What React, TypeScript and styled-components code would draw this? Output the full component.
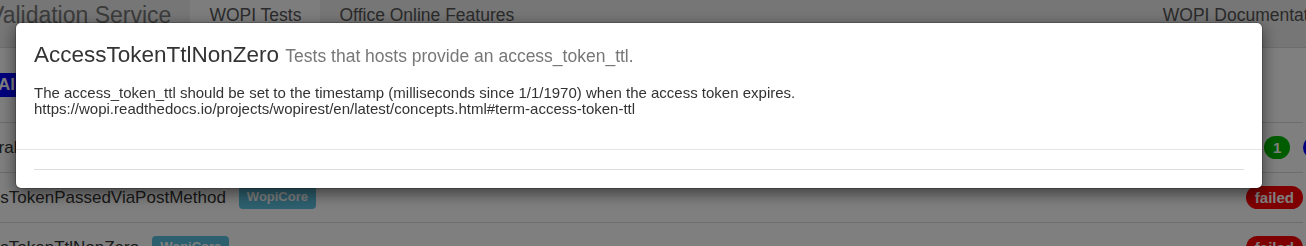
import React from "react";
import styled, { createGlobalStyle } from "styled-components";

const GlobalStyle = createGlobalStyle`
  * { box-sizing: border-box; }
  html, body {
    margin: 0;
    padding: 0;
    overflow: hidden;
    background: #ffffff;
  }
  body {
    font-family: "Liberation Sans", Arial, sans-serif;
    color: #333333;
  }
`;

const Page = styled.div`
  width: 1306px;
  height: 246px;
  overflow: hidden;
`;

/* ---------- navbar (under the backdrop) ---------- */

const Navbar = styled.nav`
  display: flex;
  align-items: stretch;
  height: 64px;
  margin-top: -16px;
  background: #ececec;
  border-bottom: 1px solid #dadada;
`;

const Brand = styled.span`
  margin-left: -11px;
  padding: 18.75px 19px 0 0;
  font-size: 23px;
  line-height: 25px;
  color: #777777;
  white-space: nowrap;
`;

const NavItem = styled.a<{ $active?: boolean }>`
  display: block;
  padding: 18.75px 19px 0;
  font-size: 17.5px;
  line-height: 25px;
  color: #555555;
  text-decoration: none;
  white-space: nowrap;
  background: ${(p) => (p.$active ? "#fbfbfb" : "transparent")};
`;

const NavRight = styled(NavItem)`
  margin-left: auto;
  margin-right: -45px;
`;

/* ---------- main list (under the backdrop) ---------- */

const Main = styled.main`
  margin: 0 3px 0 -46px;
`;

const FilterBar = styled.div`
  display: flex;
  gap: 8px;
  height: 74px;
  padding: 25px 0 25px 35px;
`;

const FilterPill = styled.span<{ $bg: string }>`
  display: inline-flex;
  align-items: center;
  height: 24px;
  padding: 0 9px;
  background: ${(p) => p.$bg};
  color: #ffffff;
  font-size: 17px;
  font-weight: bold;
`;

const Row = styled.div`
  display: flex;
  align-items: center;
  height: 50px;
  border-top: 1px solid #dadada;
  font-size: 17px;
  white-space: nowrap;
`;

const TestName = styled.span<{ $indent?: number }>`
  margin-left: ${(p) => p.$indent ?? 0}px;
  color: #333333;
`;

const CategoryLabel = styled.span`
  margin-left: 13px;
  padding: 4px 8px 5px;
  border-radius: 4px;
  background: #5bc0de;
  color: #ffffff;
  font-size: 13px;
  line-height: 14px;
  font-weight: bold;
`;

const Badges = styled.div<{ $overflow?: number }>`
  display: flex;
  gap: 13px;
  margin-left: auto;
  margin-right: ${(p) => -(p.$overflow ?? 0)}px;
`;

const Badge = styled.span<{ $bg: string }>`
  padding: 4px 9px;
  border-radius: 12px;
  background: ${(p) => p.$bg};
  color: #ffffff;
  font-size: 15px;
  line-height: 15px;
  font-weight: bold;
`;

/* ---------- modal ---------- */

const Backdrop = styled.div`
  position: fixed;
  inset: 0;
  background: rgba(0, 0, 0, 0.5);
`;

const Dialog = styled.div`
  position: fixed;
  top: 22px;
  left: 15px;
  width: 1248px;
  background: #ffffff;
  background-clip: padding-box;
  border: 1px solid rgba(0, 0, 0, 0.2);
  border-radius: 6px;
  box-shadow: 0 5px 15px rgba(0, 0, 0, 0.5);
`;

const DialogHeader = styled.div`
  padding: 18px 18px 0;
`;

const Title = styled.h3`
  margin: 0;
  font-size: 22.5px;
  line-height: 27px;
  font-weight: normal;
  color: #333333;
`;

const Subtitle = styled.small`
  font-size: 17.5px;
  color: #777777;
`;

const DialogBody = styled.div`
  padding: 15px 18px 32px;
  font-size: 15px;
  line-height: 16px;
  color: #333333;
`;

const DialogFooter = styled.div`
  padding: 19px 18px 18px;
  border-top: 1px solid #e5e5e5;
`;

const Rule = styled.hr`
  margin: 0;
  border: 0;
  border-top: 1px solid #dedede;
`;

export default function App() {
  return (
    <>
      <GlobalStyle />
      <Page>
        <Navbar>
          <Brand>Validation Service</Brand>
          <NavItem $active href="#">WOPI Tests</NavItem>
          <NavItem href="#">Office Online Features</NavItem>
          <NavRight href="#">WOPI Documentation</NavRight>
        </Navbar>
        <Main>
          <FilterBar>
            <FilterPill $bg="#0000ff">All</FilterPill>
            <FilterPill $bg="#5cb85c">Passed</FilterPill>
            <FilterPill $bg="#d9534f">Failed</FilterPill>
          </FilterBar>
          <Row>
            <TestName $indent={3}>GeneralTests</TestName>
            <Badges $overflow={66}>
              <Badge $bg="#00b800">1</Badge>
              <Badge $bg="#0000ff">1</Badge>
              <Badge $bg="#ff0000">2</Badge>
            </Badges>
          </Row>
          <Row>
            <TestName>AccessTokenPassedViaPostMethod</TestName>
            <CategoryLabel>WopiCore</CategoryLabel>
            <Badges>
              <Badge $bg="#ff0000">failed</Badge>
            </Badges>
          </Row>
          <Row>
            <TestName>AccessTokenTtlNonZero</TestName>
            <CategoryLabel>WopiCore</CategoryLabel>
            <Badges>
              <Badge $bg="#ff0000">failed</Badge>
            </Badges>
          </Row>
        </Main>
      </Page>
      <Backdrop />
      <Dialog role="dialog">
        <DialogHeader>
          <Title>
            AccessTokenTtlNonZero <Subtitle>Tests that hosts provide an access_token_ttl.</Subtitle>
          </Title>
        </DialogHeader>
        <DialogBody>
          The access_token_ttl should be set to the timestamp (milliseconds since 1/1/1970) when the access token expires.
          <br />
          https://wopi.readthedocs.io/projects/wopirest/en/latest/concepts.html#term-access-token-ttl
        </DialogBody>
        <DialogFooter>
          <Rule />
        </DialogFooter>
      </Dialog>
    </>
  );
}
